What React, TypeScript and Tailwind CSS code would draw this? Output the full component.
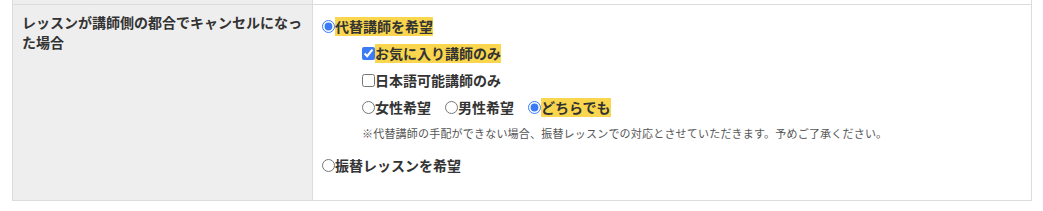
import React from 'react';

const Hl = ({ children }: { children: React.ReactNode }) => (
  <span className="inline-block h-[19px] leading-[19px] bg-[#f9d64d]">{children}</span>
);

const App = () => {
  return (
    <div
      className="w-[1043px] h-[211px] bg-white text-[#333]"
      style={{ fontFamily: '"Noto Sans CJK JP", "Noto Sans", sans-serif' }}
    >
      <div className="ml-[12px] w-[1020px] border-x border-[#dcdcdc]">
        {/* tail of the previous row */}
        <div className="flex h-[4px]">
          <div className="w-[300px] bg-[#eeeeee] border-r border-[#dcdcdc]" />
          <div className="flex-1" />
        </div>

        <div className="flex border-y border-[#dcdcdc]">
          <div className="w-[300px] shrink-0 bg-[#eeeeee] border-r border-[#dcdcdc] pl-[9px] pr-[10px] pt-[7px] text-[14px] leading-[20px] font-bold">
            レッスンが講師側の都合でキャンセルになった場合
          </div>

          <div className="flex-1 pl-[9px] pt-[12px] pb-[25px] text-[14px] font-bold">
            <label className="flex items-center h-[19px]">
              <input type="radio" name="cancel" defaultChecked className="m-0 accent-[#3b7cf6]" />
              <Hl>代替講師を希望</Hl>
            </label>

            <div className="mt-[8px] pl-[40px] flex flex-col gap-[8px]">
              <label className="flex items-center h-[19px]">
                <input type="checkbox" defaultChecked className="m-0 accent-[#3b7cf6]" />
                <Hl>お気に入り講師のみ</Hl>
              </label>
              <label className="flex items-center h-[19px]">
                <input type="checkbox" className="m-0" />
                <span className="leading-[19px]">日本語可能講師のみ</span>
              </label>
              <div className="flex items-center gap-[14px] h-[19px]">
                <label className="flex items-center">
                  <input type="radio" name="gender" className="m-0" />
                  <span className="leading-[19px]">女性希望</span>
                </label>
                <label className="flex items-center">
                  <input type="radio" name="gender" className="m-0" />
                  <span className="leading-[19px]">男性希望</span>
                </label>
                <label className="flex items-center">
                  <input type="radio" name="gender" defaultChecked className="m-0 accent-[#3b7cf6]" />
                  <Hl>どちらでも</Hl>
                </label>
              </div>
              <p className="text-[11px] leading-[16px] tracking-[0.2px] font-normal text-[#555]">
                ※代替講師の手配ができない場合、振替レッスンでの対応とさせていただきます。予めご了承ください。
              </p>
            </div>

            <label className="mt-[15px] flex items-center h-[19px]">
              <input type="radio" name="cancel" className="m-0" />
              <span className="leading-[19px]">振替レッスンを希望</span>
            </label>
          </div>
        </div>
      </div>
    </div>
  );
};

export default App;
